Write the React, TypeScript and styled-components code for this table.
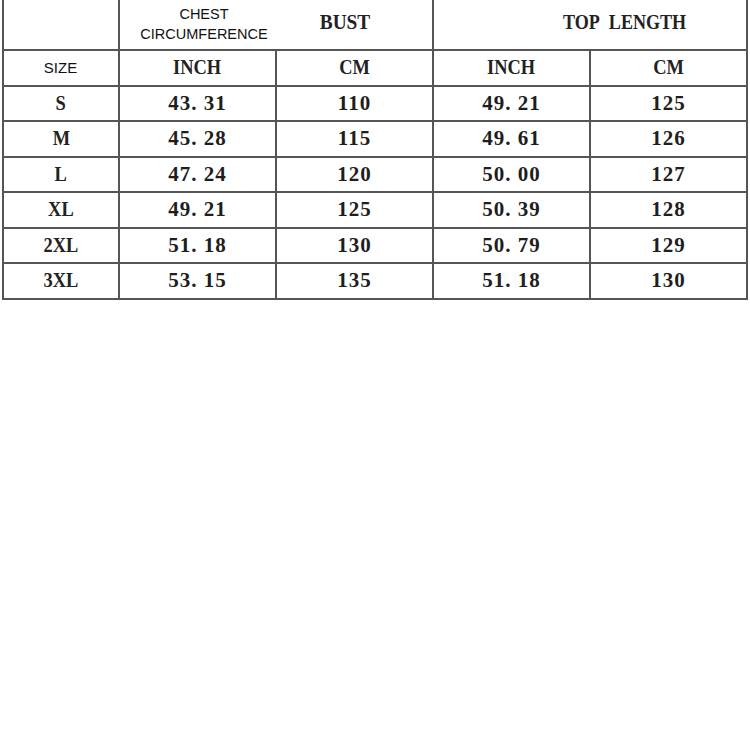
import React from 'react'
import styled, { createGlobalStyle } from 'styled-components'

type SizeRow = {
	size: string,
	bustInch: string,
	bustCm: string,
	lengthInch: string,
	lengthCm: string
}

const rows: SizeRow[] = [
	{ size: 'S', bustInch: '43. 31', bustCm: '110', lengthInch: '49. 21', lengthCm: '125' },
	{ size: 'M', bustInch: '45. 28', bustCm: '115', lengthInch: '49. 61', lengthCm: '126' },
	{ size: 'L', bustInch: '47. 24', bustCm: '120', lengthInch: '50. 00', lengthCm: '127' },
	{ size: 'XL', bustInch: '49. 21', bustCm: '125', lengthInch: '50. 39', lengthCm: '128' },
	{ size: '2XL', bustInch: '51. 18', bustCm: '130', lengthInch: '50. 79', lengthCm: '129' },
	{ size: '3XL', bustInch: '53. 15', bustCm: '135', lengthInch: '51. 18', lengthCm: '130' }
]

const GlobalStyle = createGlobalStyle`
    html, body {
        margin: 0;
        padding: 0;
        background: #ffffff;
    }
`

const App = () => {
    return (
        <>
            <GlobalStyle />
            <Chart>
                <Cell />
                <Cell span={2} align="flex-start">
                    <ChestLabel>CHEST<br />CIRCUMFERENCE</ChestLabel>
                    <BustLabel>BUST</BustLabel>
                </Cell>
                <Cell span={2}>
                    <LengthLabel>TOP&nbsp; LENGTH</LengthLabel>
                </Cell>

                <Cell><SizeLabel>SIZE</SizeLabel></Cell>
                <Cell><SerifText>INCH</SerifText></Cell>
                <Cell><SerifText>CM</SerifText></Cell>
                <Cell><SerifText>INCH</SerifText></Cell>
                <Cell><SerifText>CM</SerifText></Cell>

                {rows.map((row) => (
                    <React.Fragment key={row.size}>
                        <Cell><SerifText>{row.size}</SerifText></Cell>
                        <Cell><NumberText>{row.bustInch}</NumberText></Cell>
                        <Cell><NumberText>{row.bustCm}</NumberText></Cell>
                        <Cell><NumberText>{row.lengthInch}</NumberText></Cell>
                        <Cell><NumberText>{row.lengthCm}</NumberText></Cell>
                    </React.Fragment>
                ))}
            </Chart>
        </>
    )
}

const Chart = styled.div`
    margin-left: 2px;
    width: 746px;
    box-sizing: border-box;
    padding: 0 2px 2px 2px;
    display: grid;
    grid-template-columns: 114px repeat(4, 155px);
    grid-template-rows: 49px repeat(7, 33.5px);
    gap: 2px;
    background: #555555;
`

const Cell = styled.div<{ span?: number, align?: string }>`
    grid-column: span ${(p) => p.span || 1};
    background: #ffffff;
    display: flex;
    align-items: center;
    justify-content: ${(p) => p.align || 'center'};
    overflow: hidden;
`

const SerifText = styled.span`
    display: inline-block;
    font-family: "Liberation Serif", "Times New Roman", serif;
    font-weight: 700;
    font-size: 20px;
    color: #222222;
    transform: scaleX(0.92);
    white-space: pre;
`

const NumberText = styled(SerifText)`
    font-size: 21px;
    letter-spacing: 1px;
    transform: none;
    color: #1e1e1e;
`

const SansText = styled.span`
    font-family: "Liberation Sans", Arial, sans-serif;
    font-size: 14.5px;
    color: #111111;
`

const SizeLabel = styled(SansText)`
    font-size: 15px;
    margin-right: 1px;
`

const ChestLabel = styled(SansText)`
    flex: 0 0 168px;
    text-align: center;
    line-height: 20px;
    margin-top: -1px;
`

const BustLabel = styled(SerifText)`
    flex: 0 0 114px;
    text-align: center;
    font-size: 21px;
    margin-top: -5px;
`

const LengthLabel = styled(SerifText)`
    font-size: 21px;
    margin-left: 70px;
    margin-top: -5px;
    transform: scaleX(0.86);
`

export default App
